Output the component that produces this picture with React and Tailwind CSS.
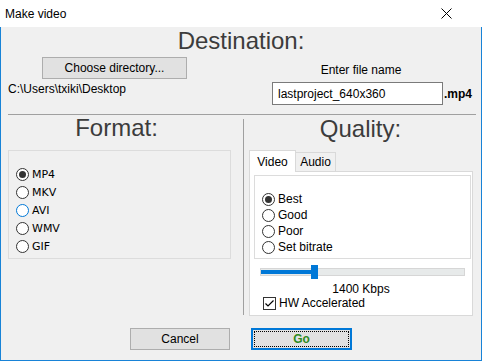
import React from "react";

const Radio = ({ checked, hover }) => (
  <span
    className={`w-[13px] h-[13px] shrink-0 rounded-full border bg-white flex items-center justify-center ${
      hover ? "border-[#0078d7]" : "border-[#333]"
    }`}
  >
    {checked && <span className="w-[7px] h-[7px] rounded-full bg-[#333]" />}
  </span>
);

function App() {
  const formats = ["MP4", "MKV", "AVI", "WMV", "GIF"];
  const qualities = ["Best", "Good", "Poor", "Set bitrate"];

  return (
    <div className="w-[482px] h-[361px] bg-white flex flex-col font-['Liberation_Sans',Arial,sans-serif] text-[12px] text-black">
      {/* title bar */}
      <div className="h-[27px] shrink-0 flex items-center justify-between pl-[5px] pr-[30px]">
        <span className="leading-[14px]">Make video</span>
        <svg width="11" height="11" viewBox="0 0 11 11">
          <path d="M0.5 0.5 L10.5 10.5 M10.5 0.5 L0.5 10.5" stroke="#000" strokeWidth="1" />
        </svg>
      </div>

      <div className="flex-1 flex flex-col bg-[#f0f0f0] border-x border-b border-[#1883d7]">
        {/* destination */}
        <div className="mt-[2px] h-[24px] text-center text-[24px] leading-[24px] text-[#3c3c3c]">Destination:</div>
        <div className="h-[61px] flex">
          <div className="w-[242px] flex flex-col">
            <button className="ml-[41px] mt-[4px] w-[145px] h-[22px] bg-[#e1e1e1] border border-[#adadad] leading-[14px]">
              Choose directory...
            </button>
            <span className="ml-[7px] mt-[3px] leading-[14px]">C:\Users\txiki\Desktop</span>
          </div>
          <div className="flex-1 flex flex-col">
            <span className="mt-[10px] pr-[2px] text-center leading-[14px]">Enter file name</span>
            <div className="mt-[5px] ml-[29px] flex items-center">
              <div className="w-[171px] h-[23px] bg-white border border-[#7a7a7a] pl-[5px] flex items-center leading-[14px]">
                lastproject_640x360
              </div>
              <span className="ml-px font-bold leading-[14px] mt-[1px]">.mp4</span>
            </div>
          </div>
        </div>
        <div className="ml-[7px] mr-[5px] h-px bg-[#a0a0a0]" />

        {/* format + quality */}
        <div className="h-[202px] flex">
          <div className="w-[242px] flex flex-col">
            <div className="mt-[1px] pr-[11px] h-[24px] text-center text-[24px] leading-[24px] text-[#3c3c3c]">Format:</div>
            <div className="ml-[7px] mt-[10px] w-[223px] h-[109px] border border-[#dcdcdc] pt-[14px] pl-[7px] flex flex-col font-['DejaVu_Sans',sans-serif] text-[11px]">
              {formats.map((f, i) => (
                <div key={f} className="h-[18px] flex items-center gap-[3px]">
                  <Radio checked={i === 0} hover={f === "AVI"} />
                  <span className="leading-[13px]">{f}</span>
                </div>
              ))}
            </div>
          </div>
          <div className="w-px mt-[4px] h-[196px] bg-[#a0a0a0]" />
          <div className="flex-1 flex flex-col">
            <div className="mt-[2px] pr-[4px] h-[24px] text-center text-[24px] leading-[24px] text-[#3c3c3c]">Quality:</div>
            <div className="ml-[5px] mt-[9px] flex items-end h-[21px]">
              <div className="relative z-10 -mb-px w-[47px] h-[22px] bg-white border border-b-0 border-[#d9d9d9] flex items-center justify-center leading-[14px]">
                Video
              </div>
              <div className="w-[40px] h-[19px] bg-[#f0f0f0] border border-l-0 border-b-0 border-[#d9d9d9] flex items-center justify-center leading-[14px]">
                Audio
              </div>
            </div>
            <div className="ml-[5px] w-[224px] h-[145px] bg-white border border-[#d9d9d9] flex flex-col">
              <div className="ml-[4px] mt-[3px] w-[217px] h-[84px] border border-[#dcdcdc] pt-[15px] pl-[7px] flex flex-col">
                {qualities.map((q, i) => (
                  <div key={q} className="h-[16px] flex items-center gap-[3px]">
                    <Radio checked={i === 0} />
                    <span className="leading-[14px]">{q}</span>
                  </div>
                ))}
              </div>
              {/* slider */}
              <div className="relative ml-[10px] mt-[6px] w-[205px] h-[14px] flex items-center">
                <div className="w-full h-[8px] bg-[#e7eaea] border border-[#d6d6d6] flex items-center">
                  <div className="w-[53px] h-[4px] bg-[#0078d7]" />
                </div>
                <div className="absolute left-[51px] top-0 w-[7px] h-[14px] bg-[#0078d7]" />
              </div>
              <span className="mt-[3px] text-center leading-[14px]">1400 Kbps</span>
              <div className="ml-[13px] h-[14px] flex items-center gap-[3px]">
                <span className="w-[13px] h-[13px] border border-[#333] bg-white flex items-center justify-center">
                  <svg width="11" height="11" viewBox="0 0 11 11">
                    <path d="M1.5 5.5 L4 8 L9.5 2.5" stroke="#000" strokeWidth="1.2" fill="none" />
                  </svg>
                </span>
                <span className="leading-[14px]">HW Accelerated</span>
              </div>
            </div>
          </div>
        </div>

        {/* buttons */}
        <div className="mt-[11px] pl-[129px] flex gap-[21px]">
          <button className="w-[100px] h-[22px] bg-[#e1e1e1] border border-[#adadad] leading-[14px]">Cancel</button>
          <button className="w-[101px] h-[22px] bg-[#e1e1e1] border-2 border-[#0078d7] p-px">
            <span className="w-full h-full border border-dotted border-black flex items-center justify-center font-bold text-[#2e8b1e] leading-[14px]">
              Go
            </span>
          </button>
        </div>
      </div>
    </div>
  );
}

export default App;
